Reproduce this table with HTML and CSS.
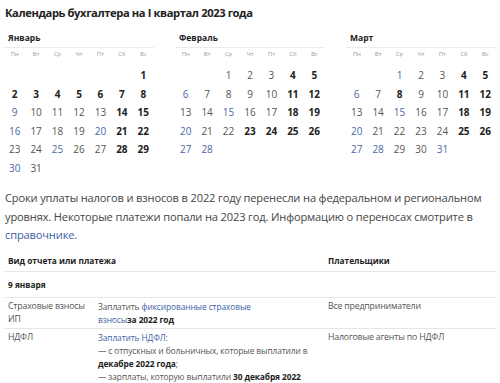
FILE: index.html
```html
<!DOCTYPE html>
<html lang="ru">
<head>
<meta charset="utf-8">
<link rel="stylesheet" href="styles.css">
</head>
<body>
<h1 class="title">Календарь бухгалтера на I квартал 2023 года</h1>
<div class="months">
  <div class="month">
    <div class="mname">Январь</div>
    <div class="grid">
      <span class="wd">Пн</span><span class="wd">Вт</span><span class="wd">Ср</span><span class="wd">Чт</span><span class="wd">Пт</span><span class="wd">Сб</span><span class="wd">Вс</span>
      <span class="sp"></span>
      <span class="e"></span><span class="e"></span><span class="e"></span><span class="e"></span><span class="e"></span><span class="e"></span><span class="b">1</span>
      <span class="b">2</span><span class="b">3</span><span class="b">4</span><span class="b">5</span><span class="b">6</span><span class="b">7</span><span class="b">8</span>
      <span class="l">9</span><span>10</span><span>11</span><span>12</span><span>13</span><span class="b">14</span><span class="b">15</span>
      <span class="l">16</span><span>17</span><span>18</span><span>19</span><span class="l">20</span><span class="b">21</span><span class="b">22</span>
      <span>23</span><span>24</span><span class="l">25</span><span>26</span><span>27</span><span class="b">28</span><span class="b">29</span>
      <span class="l">30</span><span>31</span>
    </div>
  </div>
  <div class="month">
    <div class="mname">Февраль</div>
    <div class="grid">
      <span class="wd">Пн</span><span class="wd">Вт</span><span class="wd">Ср</span><span class="wd">Чт</span><span class="wd">Пт</span><span class="wd">Сб</span><span class="wd">Вс</span>
      <span class="sp"></span>
      <span class="e"></span><span class="e"></span><span>1</span><span>2</span><span>3</span><span class="b">4</span><span class="b">5</span>
      <span class="l">6</span><span>7</span><span>8</span><span>9</span><span>10</span><span class="b">11</span><span class="b">12</span>
      <span>13</span><span>14</span><span class="l">15</span><span>16</span><span>17</span><span class="b">18</span><span class="b">19</span>
      <span class="l">20</span><span>21</span><span>22</span><span class="b">23</span><span class="b">24</span><span class="b">25</span><span class="b">26</span>
      <span class="l">27</span><span class="l">28</span>
    </div>
  </div>
  <div class="month">
    <div class="mname">Март</div>
    <div class="grid">
      <span class="wd">Пн</span><span class="wd">Вт</span><span class="wd">Ср</span><span class="wd">Чт</span><span class="wd">Пт</span><span class="wd">Сб</span><span class="wd">Вс</span>
      <span class="sp"></span>
      <span class="e"></span><span class="e"></span><span class="l">1</span><span>2</span><span>3</span><span class="b">4</span><span class="b">5</span>
      <span class="l">6</span><span>7</span><span class="b">8</span><span>9</span><span>10</span><span class="b">11</span><span class="b">12</span>
      <span>13</span><span>14</span><span class="l">15</span><span>16</span><span>17</span><span class="b">18</span><span class="b">19</span>
      <span class="l">20</span><span>21</span><span>22</span><span>23</span><span>24</span><span class="b">25</span><span class="b">26</span>
      <span class="l">27</span><span class="l">28</span><span>29</span><span>30</span><span class="l">31</span>
    </div>
  </div>
</div>
<p class="note">Сроки уплаты налогов и взносов в 2022 году перенесли на федеральном и региональном уровнях. Некоторые платежи попали на 2023 год. Информацию о переносах смотрите в <a class="link" href="#">справочнике</a>.</p>
<table class="tbl">
  <colgroup><col class="w1"><col class="w2"><col></colgroup>
  <thead>
    <tr><th colspan="2">Вид отчета или платежа</th><th>Плательщики</th></tr>
  </thead>
  <tbody>
    <tr class="date"><td colspan="3">9 января</td></tr>
    <tr>
      <td class="c1">Страховые взносы ИП</td>
      <td class="c2">Заплатить <a class="link" href="#">фиксированные страховые<br>взносы</a><strong>за 2022 год</strong></td>
      <td class="c3">Все предприниматели</td>
    </tr>
    <tr>
      <td class="c1">НДФЛ</td>
      <td class="c2"><a class="link" href="#">Заплатить НДФЛ</a>:<br>— с отпускных и больничных, которые выплатили в <strong>декабре 2022 года</strong>;<br>— зарплаты, которую выплатили <strong>30 декабря 2022</strong></td>
      <td class="c3">Налоговые агенты по НДФЛ</td>
    </tr>
  </tbody>
</table>
</body>
</html>
```
FILE: styles.css
```css
* { box-sizing: border-box; }
body {
  margin: 0;
  padding: 0 4px;
  background: #fff;
  font-family: "Open Sans", "Liberation Sans", sans-serif;
  color: #444;
  overflow: hidden;
}
.title {
  margin: 4px 0 0 1px;
  font-size: 11.2px;
  font-weight: 700;
  color: #222;
  line-height: 17px;
  letter-spacing: -0.4px;
}
.months {
  display: grid;
  grid-template-columns: 150px 150px 150px;
  column-gap: 21px;
  margin-top: 10px;
}
.mname {
  font-size: 8.5px;
  font-weight: 700;
  color: #222;
  padding: 0 0 3px 4px;
  line-height: 13px;
  border-bottom: 1px solid #ececec;
}
.grid {
  display: grid;
  grid-template-columns: repeat(7, 1fr);
  grid-template-rows: 13px 5px;
  grid-auto-rows: 18.5px;
  text-align: center;
  font-size: 10px;
  color: #555;
  align-items: center;
}
.grid .wd {
  font-size: 6px;
  color: #999;
  line-height: 13px;
}
.grid .sp {
  grid-column: 1 / -1;
}
.grid .b { font-weight: 700; color: #222; }
.grid .l { color: #4867a8; }
.note {
  margin: 12px 0 0 1px;
  font-size: 11.1px;
  line-height: 18.5px;
  color: #444;
  letter-spacing: -0.15px;
}
.link { color: #3d5fa6; text-decoration: none; }
.tbl {
  width: 100%;
  border-collapse: collapse;
  margin-top: 5px;
  font-size: 8.4px;
  color: #555;
  table-layout: fixed;
}
.tbl .w1 { width: 90px; }
.tbl .w2 { width: 230px; }
.tbl th {
  text-align: left;
  font-size: 8.3px;
  font-weight: 700;
  color: #222;
  line-height: 12px;
  padding: 5px 4px 4px;
  border-bottom: 1px solid #e6e6e6;
}
.tbl td {
  padding: 2px 4px;
  vertical-align: top;
  line-height: 13px;
  border-bottom: 1px solid #e6e6e6;
}
.tbl tr.date td {
  font-weight: 700;
  color: #222;
  font-size: 8.3px;
  line-height: 12px;
  padding: 7px 4px 6px;
}
.tbl .c1, .tbl .c3 { font-size: 8.8px; letter-spacing: -0.2px; }
.tbl .c2 { letter-spacing: -0.1px; }
.tbl strong { color: #222; font-weight: 700; }
```
